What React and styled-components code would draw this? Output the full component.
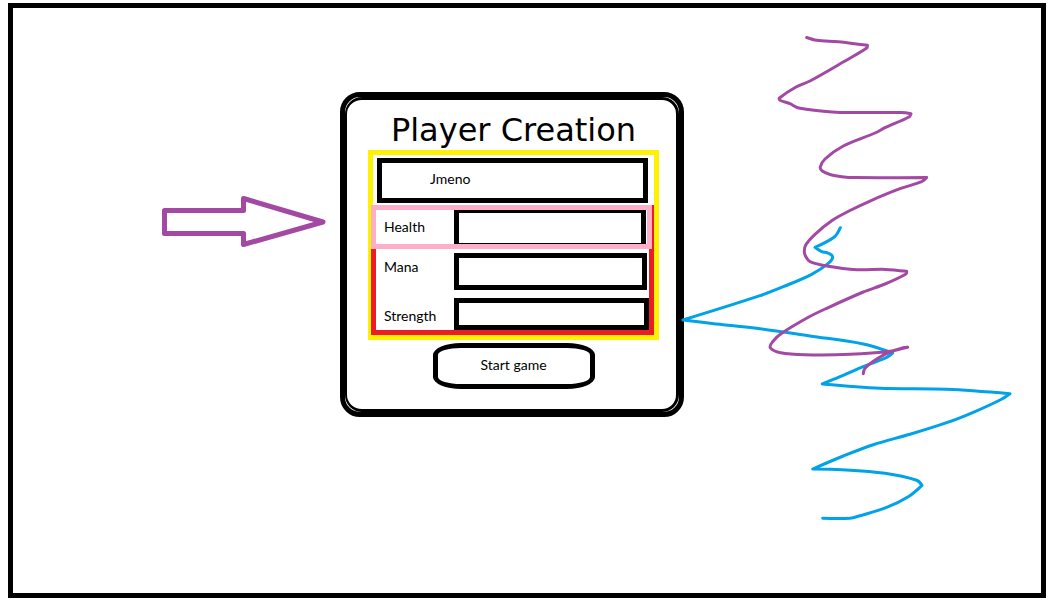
import React from "react";
import styled, { createGlobalStyle } from "styled-components";

const GlobalStyle = createGlobalStyle`
  *, *::before, *::after { box-sizing: border-box; }
  body {
    margin: 0;
    background: #fff;
    color: #000;
    font-family: Lato, "Liberation Sans", sans-serif;
    font-size: 14px;
  }
`;

const Screen = styled.main`
  display: grid;
  grid-template-columns: 327fr 344px 357fr;
  align-items: start;
  min-height: calc(100vh - 18px);
  margin: 3px 16px 15px 8px;
  border: 5px solid #000;
`;

const Arrow = styled.svg`
  display: block;
  justify-self: end;
  width: 164px;
  height: 51px;
  margin: 188px 14px 0 0;
`;

const Scribbles = styled.svg`
  display: block;
  width: 100%;
  height: auto;
  overflow: visible;
`;

const Card = styled.section`
  margin-top: 84px;
  border: 5px solid #000;
  border-radius: 20px;
  background: #fff;
`;

const CardInner = styled.form`
  display: flex;
  flex-direction: column;
  align-items: center;
  padding: 10px 17px 20px 21px;
  border: solid #000;
  border-width: 3px 3px 3px 2px;
  border-radius: 17px;
`;

const Title = styled.h1`
  margin: 0;
  font-family: "DejaVu Sans", sans-serif;
  font-size: 32px;
  font-weight: 400;
  line-height: 40px;
  white-space: nowrap;
`;

const Fields = styled.div`
  width: 100%;
  padding-top: 3px;
  border: 5px solid #fff200;
`;

const TextBox = styled.input`
  display: block;
  flex: 1;
  min-width: 0;
  width: 100%;
  margin: 0;
  padding: 0 8px;
  border: 5px solid #000;
  border-radius: 0;
  background: #fff;
  color: #000;
  font: inherit;
  outline-offset: 2px;

  &::placeholder {
    color: #000;
    opacity: 1;
  }
`;

const NameRow = styled.div`
  display: flex;
  height: 45px;
  margin: 0 6px 0 4px;

  ${TextBox} { padding: 0 48px 4px; }
`;

const Stats = styled.div`
  height: 130px;
  margin: 2px 0 0 -2px;
  border: 5px solid #ed1c24;
`;

const StatRow = styled.div`
  display: flex;
  height: ${(p) => p.$height}px;
  margin-top: ${(p) => p.$gap}px;
  padding-right: ${(p) => p.$inset}px;
`;

const HighlightRow = styled(StatRow)`
  margin: -5px -3px 0 -5px;
  border: 5px solid #ffaec9;

  ${TextBox} { border-width: 3px 5px 1px; }
`;

const StatLabel = styled.label`
  flex: 0 0 78px;
  align-self: ${(p) => p.$align || "center"};
  padding-left: 8px;
  line-height: 28px;
`;

const StartButton = styled.button`
  width: 162px;
  height: 46px;
  margin-top: 3px;
  padding: 0 0 4px;
  border: 5px solid #000;
  border-radius: 28px / 12px;
  background: #fff;
  color: #000;
  font: inherit;
  cursor: pointer;
`;

const BLUE_LINE =
  "840.3,227.7 834.3,237 815,247.3 821.7,251.7 827.7,253 832.7,257 828,263.7 811.7,274.3 785,286 760,295.7 683,320 712,323.5 760,328.7 810,336 863.3,344 892.7,353 886.7,357.3 856.7,369.3 840,376.7 822.3,384 880,388.3 946.7,389.3 1010,393.7 1000,400 973.3,412.3 946.7,422.7 910,434.3 873.3,444.7 843.3,456 812.7,469 841.7,469.7 885,473.3 916.7,480.3 922,485.3 908.3,496.7 886,507.7 860,515.7 850,518.3 822.7,518.3";

const PURPLE_LINE =
  "806.7,37.5 816.7,40.3 838.3,41.7 867.5,45.3 866.7,48 845,61 810,81 796,87 779.5,98 780,100.3 790,103.7 797.7,107.7 823.3,111.3 840,112.5 901.7,112.5 911,113.7 909,117 885,127.7 875,133 843.3,146 825,159 820.3,167 822.3,171 830.7,174.7 841.7,176.7 855,177.6 926.7,177.5 921.7,181.7 900,188.7 870,201 850,210.5 831.7,220.7 815,234.3 805.7,245 804.3,251.7 806,257 810,261.7 826.7,266 856.7,269.7 885,269.4 906.7,271.3 906,274 885,284 863.3,292 826.7,308.3 808.3,317.3 781.7,333.3 773.3,341 770.3,347.7 780.7,352.7 805,354.7 850,354.3 890,351.3 903,347.7 907.7,347.3 890,352 876.7,359 865,368.3 863.3,373.7";

// Turns a list of points into a pen-like curve; sharp turns stay sharp.
function penPath(points) {
  const pts = points.split(" ").map((p) => p.split(",").map(Number));
  const tangents = pts.map((p, i) => {
    const a = pts[i - 1];
    const b = pts[i + 1];
    if (!a || !b) return [0, 0];
    const turn = (p[0] - a[0]) * (b[0] - p[0]) + (p[1] - a[1]) * (b[1] - p[1]);
    if (turn <= 0) return [0, 0];
    const length = Math.hypot(b[0] - a[0], b[1] - a[1]);
    return [(b[0] - a[0]) / length, (b[1] - a[1]) / length];
  });
  return pts.reduce((d, p, i) => {
    if (i === 0) return `M${p[0]} ${p[1]}`;
    const q = pts[i - 1];
    const reach = Math.hypot(p[0] - q[0], p[1] - q[1]) / 3;
    const [sx, sy] = tangents[i - 1];
    const [ex, ey] = tangents[i];
    return `${d}C${q[0] + sx * reach} ${q[1] + sy * reach} ${p[0] - ex * reach} ${p[1] - ey * reach} ${p[0]} ${p[1]}`;
  }, "");
}

const STATS = [
  { id: "health", label: "Health", height: 44, inset: 1, highlight: true },
  { id: "mana", label: "Mana", height: 37, gap: 4, inset: 2, align: "flex-start" },
  { id: "strength", label: "Strength", height: 32, gap: 8, inset: 0, align: "flex-end" },
];

function Stat({ id, label, height, gap = 0, inset, align, highlight }) {
  const Row = highlight ? HighlightRow : StatRow;
  return (
    <Row $height={height} $gap={gap} $inset={inset}>
      <StatLabel htmlFor={id} $align={align}>{label}</StatLabel>
      <TextBox id={id} name={id} type="text" />
    </Row>
  );
}

export default function App() {
  return (
    <>
      <GlobalStyle />
      <Screen>
        <Arrow viewBox="162 196 164 51" aria-hidden="true">
          <path
            d="M164.5 210.5H243.5V198.5L323 222L243.5 244.5V233.5H164.5Z"
            fill="none"
            stroke="#a349a4"
            strokeWidth="5"
            strokeLinejoin="round"
          />
        </Arrow>
        <Card>
          <CardInner onSubmit={(e) => e.preventDefault()}>
            <Title>Player Creation</Title>
            <Fields>
              <NameRow>
                <TextBox name="name" type="text" placeholder="Jmeno" aria-label="Jmeno" />
              </NameRow>
              <Stats>
                {STATS.map((s) => <Stat key={s.id} {...s} />)}
              </Stats>
            </Fields>
            <StartButton type="submit">Start game</StartButton>
          </CardInner>
        </Card>
        <Scribbles viewBox="684 8 357 585" aria-hidden="true">
          <g fill="none" strokeWidth="3" strokeLinecap="round" strokeLinejoin="round">
            <path d={penPath(BLUE_LINE)} stroke="#00a2e8" />
            <path d={penPath(PURPLE_LINE)} stroke="#a349a4" />
          </g>
        </Scribbles>
      </Screen>
    </>
  );
}
